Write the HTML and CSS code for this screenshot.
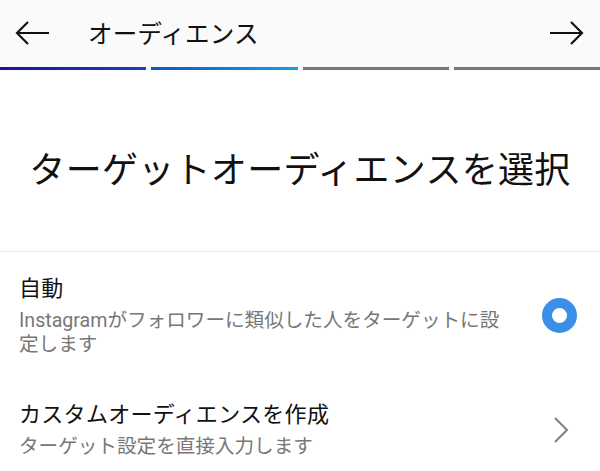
FILE: index.html
```html
<!DOCTYPE html>
<html lang="ja">
<head>
<meta charset="utf-8">
<link rel="stylesheet" href="styles.css">
</head>
<body>
<div class="app">
  <header class="topbar">
    <svg class="icon" width="36" height="26" viewBox="0 0 36 26"><path d="M34 13H2M13 2L2 13l11 11" fill="none" stroke="#111" stroke-width="2.2"/></svg>
    <div class="top-title">オーディエンス</div>
    <svg class="icon" width="36" height="26" viewBox="0 0 36 26"><path d="M2 13h32M23 2l11 11-11 11" fill="none" stroke="#111" stroke-width="2.2"/></svg>
  </header>
  <div class="progress">
    <span class="seg s1"></span>
    <span class="seg s2"></span>
    <span class="seg s3"></span>
    <span class="seg s3"></span>
  </div>
  <h1 class="heading">ターゲットオーディエンスを選択</h1>
  <div class="divider"></div>
  <div class="option">
    <div class="opt-text">
      <div class="opt-title">自動</div>
      <div class="opt-sub">Instagramがフォロワーに類似した人をターゲットに設定します</div>
    </div>
    <div class="radio"></div>
  </div>
  <div class="option opt2">
    <div class="opt-text">
      <div class="opt-title">カスタムオーディエンスを作成</div>
      <div class="opt-sub">ターゲット設定を直接入力します</div>
    </div>
    <svg class="chev" width="16" height="28" viewBox="0 0 16 28"><path d="M2 2l12 12L2 26" fill="none" stroke="#808080" stroke-width="2"/></svg>
  </div>
</div>
</body>
</html>
```
FILE: styles.css
```css
* { box-sizing: border-box; }
html, body { margin: 0; padding: 0; background: #fff; }
body { font-family: Roboto, "Noto Sans CJK JP", "Noto Sans", sans-serif; color: #111; }
.app { width: 600px; height: 471px; overflow: hidden; }
.topbar {
  height: 67px;
  background: #fafafa;
  display: flex;
  align-items: center;
  padding: 0 16px 0 15px;
}
.top-title { font-size: 24.5px; flex: 1; margin-left: 37px; margin-top: -2px; letter-spacing: 0.2px; }
.icon { display: block; margin-top: -2px; }
.progress { display: flex; gap: 5px; height: 4px; background: #fafafa; }
.seg { flex: 1; height: 3px; }
.s1 { background: linear-gradient(90deg, #1a10a8, #1e3cc8); }
.s2 { background: linear-gradient(90deg, #0c58cc, #12a0e0); }
.s3 { background: #777; }
.heading {
  margin: 0;
  font-weight: 400;
  font-size: 36px;
  text-align: center;
  padding-top: 70px;
  height: 180px;
  letter-spacing: 0.3px;
}
.divider { height: 1px; background: #e6e6e6; }
.option {
  display: flex;
  align-items: center;
  padding: 22px 23px 0 19px;
}
.opt2 { padding-top: 43px; }
.opt-text { flex: 1; }
.opt-title { font-size: 22px; line-height: 30px; letter-spacing: 0.3px; }
.opt-sub { font-size: 19.6px; line-height: 24px; color: #777; width: 490px; margin-top: 5px; }
.radio {
  width: 35px; height: 35px; border-radius: 50%;
  border: 10px solid #3b8fe8;
  background: #fff;
}
.chev { display: block; margin-right: 8px; }
```
